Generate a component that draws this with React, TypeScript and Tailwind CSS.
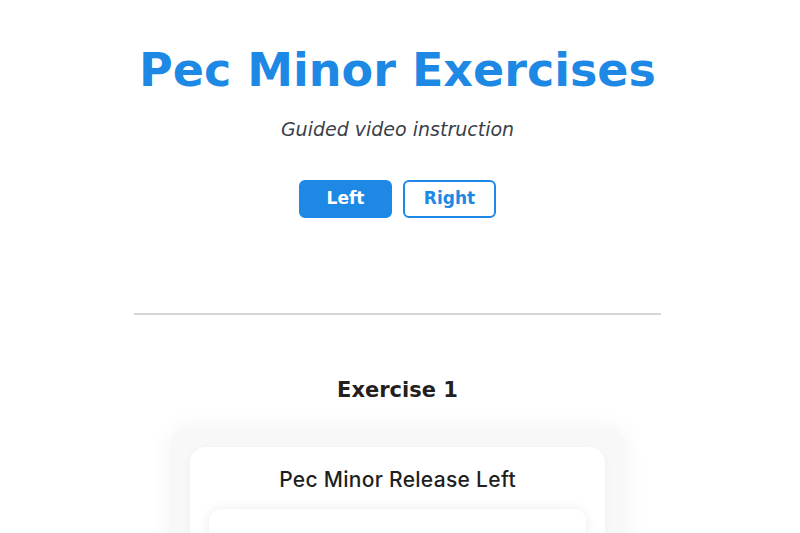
import { useState } from "react";

const heading = { fontFamily: '"DejaVu Sans", "Liberation Sans", sans-serif' };

export default function App() {
    const [side, setSide] = useState<"Left" | "Right">("Left");

    return (
        <div className="min-h-screen bg-white flex flex-col items-center pr-[5px]" style={heading}>
            {/* Header */}
            <h1 className="mt-[47px] text-[46px] leading-none font-bold text-[#1e88e5]">
                Pec Minor Exercises
            </h1>
            <p className="mt-[27px] text-[19px] leading-none italic text-[#3a3f4a]">
                Guided video instruction
            </p>

            {/* Side toggle */}
            <div className="mt-[41px] flex gap-[11px]">
                {(["Left", "Right"] as const).map((s) => (
                    <button
                        key={s}
                        onClick={() => setSide(s)}
                        className={`w-[93px] h-[38px] rounded-[6px] text-[17px] font-bold border-2 border-[#1e88e5] ${side === s ? "bg-[#1e88e5] text-white" : "bg-white text-[#1e88e5]"
                            }`}
                    >
                        {s}
                    </button>
                ))}
            </div>

            <div className="mt-[95px] w-[527px] h-[2px] bg-[#d4d6da]" />

            {/* Exercise list */}
            <h2 className="mt-[65px] text-[21px] leading-none font-bold text-[#241e1e]">
                Exercise 1
            </h2>

            <div className="mt-[27px] w-[455px] rounded-2xl bg-[#f8f8f8] shadow-[0_0_24px_rgba(0,0,0,0.05)] px-5 pt-[19px] pb-5">
                <div className="rounded-2xl bg-white shadow-[0_2px_10px_rgba(0,0,0,0.04)] px-[19px] pt-[22px] pb-5">
                    <h3
                        className="text-center text-[21px] leading-none font-medium tracking-[0.3px] text-[#1f1f1f]"
                        style={{ fontFamily: 'Inter, "Liberation Sans", sans-serif' }}
                    >
                        Pec Minor Release {side}
                    </h3>
                    <div className="mt-[19px] h-[220px] rounded-xl bg-white shadow-[0_0_12px_rgba(0,0,0,0.08)]" />
                </div>
            </div>
        </div>
    );
}
